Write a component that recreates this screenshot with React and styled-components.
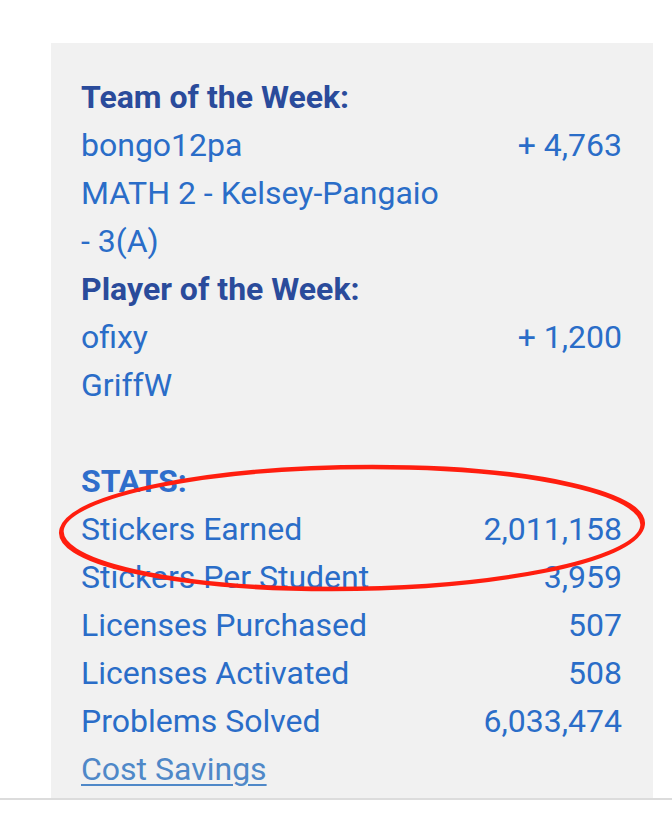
import React from 'react';
import styled, { createGlobalStyle } from 'styled-components';

const GlobalStyle = createGlobalStyle`
  html, body {
    margin: 0;
    padding: 0;
    background: #ffffff;
  }
  body {
    font-family: Roboto, 'Liberation Sans', Arial, sans-serif;
  }
`;

const Page = styled.div`
  width: 672px;
  height: 818px;
  overflow: hidden;
  display: flex;
  flex-direction: column;
`;

const PanelArea = styled.div`
  padding: 43px 0 0 51px;
`;

const Panel = styled.section`
  position: relative;
  width: 602px;
  height: 755px;
  box-sizing: border-box;
  padding: 30px 31px 0 30px;
  background: #f1f1f1;
  overflow: hidden;
`;

const Divider = styled.div`
  height: 2px;
  background: #dcdcdc;
`;

const Table = styled.div`
  display: grid;
  grid-template-columns: 366px 1fr;
  font-size: 32px;
  line-height: 48px;
  color: #2a6dc8;
`;

const Heading = styled.div`
  grid-column: 1 / -1;
  font-weight: 700;
  color: ${({ $bright }) => ($bright ? '#2f6ecb' : '#2a4b9b')};
`;

const Name = styled.div`
  max-width: 366px;
`;

const Value = styled.div`
  text-align: right;
  white-space: nowrap;
`;

const Spacer = styled.div`
  grid-column: 1 / -1;
  height: 48px;
`;

const CostLink = styled.a`
  grid-column: 1 / -1;
  color: #4f88c8;
  text-decoration: underline;
  text-decoration-thickness: 2px;
  text-underline-offset: 4px;
  justify-self: start;
`;

const Annotation = styled.svg`
  position: absolute;
  left: -51px;
  top: -43px;
  pointer-events: none;
`;

const winners = [
  {
    title: 'Team of the Week:',
    name: 'bongo12pa',
    points: '+ 4,763',
    sub: 'MATH 2 - Kelsey-Pangaio - 3(A)',
  },
  {
    title: 'Player of the Week:',
    name: 'ofixy',
    points: '+ 1,200',
    sub: 'GriffW',
  },
];

const stats = [
  ['Stickers Earned', '2,011,158'],
  ['Stickers Per Student', '3,959'],
  ['Licenses Purchased', '507'],
  ['Licenses Activated', '508'],
  ['Problems Solved', '6,033,474'],
];

const App = () => (
  <Page>
    <GlobalStyle />
    <PanelArea>
      <Panel>
        <Table>
          {winners.map((w) => (
            <React.Fragment key={w.title}>
              <Heading>{w.title}</Heading>
              <Name>{w.name}</Name>
              <Value>{w.points}</Value>
              <Name>{w.sub}</Name>
              <Value />
            </React.Fragment>
          ))}
          <Spacer />
          <Heading $bright>STATS:</Heading>
          {stats.map(([label, num]) => (
            <React.Fragment key={label}>
              <Name>{label}</Name>
              <Value>{num}</Value>
            </React.Fragment>
          ))}
          <CostLink href="#">Cost Savings</CostLink>
        </Table>
        <Annotation width="672" height="818" viewBox="0 0 672 818">
          <ellipse
            cx="0"
            cy="0"
            rx="290"
            ry="61"
            fill="none"
            stroke="#ff1e0f"
            strokeWidth="4.5"
            transform="translate(352 528) skewX(-18)"
          />
        </Annotation>
      </Panel>
    </PanelArea>
    <Divider />
  </Page>
);

export default App;
